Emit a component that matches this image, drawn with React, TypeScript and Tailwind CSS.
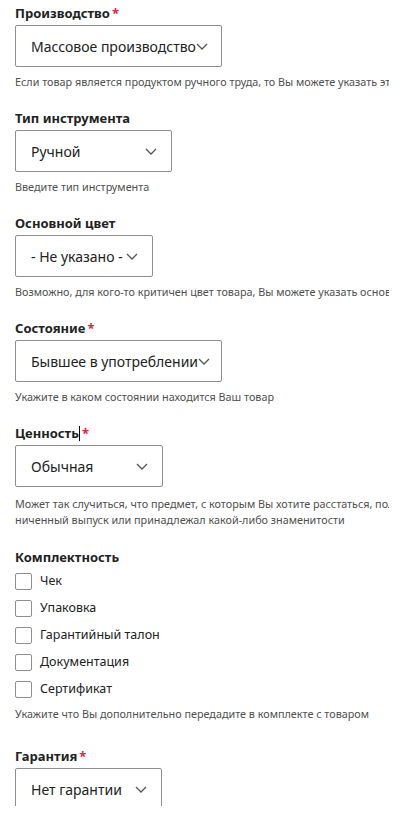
import React from "react";

function Chevron() {
  return (
    <svg width="12" height="7" viewBox="0 0 12 7" className="shrink-0">
      <path d="M1 1l5 5 5-5" fill="none" stroke="#555" strokeWidth="1.3" />
    </svg>
  );
}

function Select({ value, w }: { value: string; w: string }) {
  return (
    <div
      className={`${w} h-[42px] mt-[3px] border border-[#8f8f8f] rounded-[2px] bg-white flex items-center justify-between pl-[15px] pr-[14px]`}
    >
      <span className="text-[14px] text-[#222] whitespace-nowrap">{value}</span>
      <Chevron />
    </div>
  );
}

function Label({ text, req, caret }: { text: string; req?: boolean; caret?: boolean }) {
  return (
    <div className="h-[18px] leading-[18px] text-[13px] font-bold text-[#222] flex items-center">
      <span>{text}</span>
      {caret && <span className="inline-block w-px h-[15px] bg-black" />}
      {req && <span className="text-[#e0243c] ml-[2px]">*</span>}
    </div>
  );
}

function Help({ lines }: { lines: string[] }) {
  return (
    <div className="mt-[7px] text-[10.8px] leading-[16px] text-[#4f4f4f]">
      {lines.map((l) => (
        <div key={l} className="whitespace-nowrap">
          {l}
        </div>
      ))}
    </div>
  );
}

const kit = ["Чек", "Упаковка", "Гарантийный талон", "Документация", "Сертификат"];

export default function App() {
  return (
    <div
      className="w-[389px] h-[806px] overflow-hidden bg-white pl-[15px] pt-[4px]"
      style={{ fontFamily: '"Noto Sans", "Open Sans", sans-serif' }}
    >
      <section>
        <Label text="Производство" req />
        <Select value="Массовое производство" w="w-[207px]" />
        <Help lines={["Если товар является продуктом ручного труда, то Вы можете указать это"]} />
      </section>

      <section className="mt-[19px]">
        <Label text="Тип инструмента" />
        <Select value="Ручной" w="w-[157px]" />
        <Help lines={["Введите тип инструмента"]} />
      </section>

      <section className="mt-[19px]">
        <Label text="Основной цвет" />
        <Select value="- Не указано -" w="w-[138px]" />
        <Help lines={["Возможно, для кого-то критичен цвет товара, Вы можете указать основной"]} />
      </section>

      <section className="mt-[19px]">
        <Label text="Состояние" req />
        <Select value="Бывшее в употреблении" w="w-[207px]" />
        <Help lines={["Укажите в каком состоянии находится Ваш товар"]} />
      </section>

      <section className="mt-[19px]">
        <Label text="Ценность" req caret />
        <Select value="Обычная" w="w-[148px]" />
        <div className="mt-[9px] text-[10.8px] leading-[16px] text-[#4f4f4f]">
          <div className="whitespace-nowrap">
            Может так случиться, что предмет, с которым Вы хотите расстаться, получил огра
          </div>
          <div className="whitespace-nowrap">ниченный выпуск или принадлежал какой-либо знаменитости</div>
        </div>
      </section>

      <section className="mt-[20px]">
        <Label text="Комплектность" />
        <div className="mt-[2px] flex flex-col">
          {kit.map((k) => (
            <label key={k} className="h-[27px] flex items-center gap-[8px]">
              <span className="w-[17px] h-[17px] border border-[#8f8f8f] rounded-[2px] bg-white" />
              <span className="text-[12.5px] text-[#222]">{k}</span>
            </label>
          ))}
        </div>
        <div className="mt-[3px] text-[10.8px] leading-[16px] text-[#4f4f4f] whitespace-nowrap">
          Укажите что Вы дополнительно передадите в комплекте с товаром
        </div>
      </section>

      <section className="mt-[25px]">
        <Label text="Гарантия" req />
        <Select value="Нет гарантии" w="w-[147px]" />
      </section>
    </div>
  );
}
